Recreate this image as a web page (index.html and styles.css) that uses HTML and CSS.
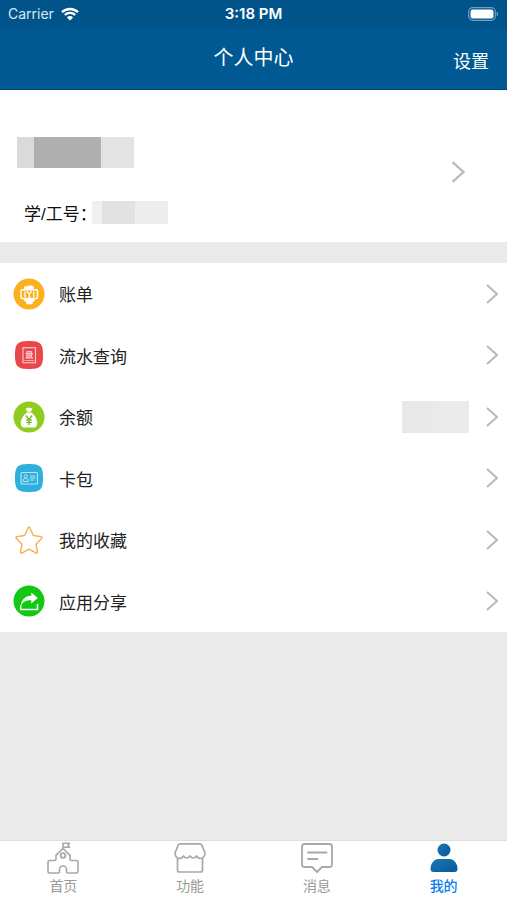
FILE: index.html
```html
<!DOCTYPE html>
<html lang="zh-CN">
<head>
<meta charset="utf-8">
<meta name="viewport" content="width=device-width, initial-scale=1">
<title>个人中心</title>
<link rel="stylesheet" href="styles.css">
</head>
<body>
<header class="header">
  <div class="status">
    <div class="carrier">
      <span>Carrier</span>
      <svg class="wifi" viewBox="0 0 18 14" aria-hidden="true">
        <path d="M1 5.200a11.500 11.500 0 0 1 16 0M3.800 8a7.500 7.500 0 0 1 10.400 0" fill="none" stroke="#fff" stroke-width="2.400"/>
        <path d="M9 13.600 5.900 10.400a4.400 4.400 0 0 1 6.200 0z" fill="#fff"/>
      </svg>
    </div>
    <time class="clock">3:18 PM</time>
    <svg class="battery" viewBox="0 0 31 14" aria-hidden="true">
      <rect x=".7" y=".7" width="26.600" height="12.600" rx="4" fill="none" stroke="#6f9fc2" stroke-width="1.200"/>
      <rect x="2.500" y="2.500" width="23" height="9" rx="2.200" fill="#fff"/>
      <path d="M28.600 4.600c2 .8 2 4 0 4.800z" fill="#6f9fc2"/>
    </svg>
  </div>
  <div class="titlebar">
    <h1 class="title">个人中心</h1>
    <button class="settings" type="button">设置</button>
  </div>
</header>

<main class="main">
  <a class="profile" href="#profile">
    <span class="identity">
      <span class="mask mask-name"></span>
      <span class="number">学/工号：<span class="mask mask-number"></span></span>
    </span>
    <svg class="chevron chevron-large" viewBox="0 0 12 20" aria-hidden="true"><path d="M1 1l10 9-10 9"/></svg>
  </a>

  <nav class="list">
    <a class="row" href="#bill">
      <svg class="icon" viewBox="0 0 32 32" aria-hidden="true">
        <circle cx="16" cy="16" r="15.500" fill="#fbb01c"/>
        <path d="M11 12V8.800l1.800-.8.900 1 .8-1.800 1.700 1 1.300-1.400 1.400 1.400 1.600-.4.500 1.200V12z" fill="#fff"/>
        <rect x="8" y="11.700" width="16.500" height="8.800" rx="1" fill="none" stroke="#fff" stroke-width="1.500"/>
        <path d="M13.800 13.200l2.500 2.800 2.500-2.800M16.300 16v4M20.800 13.500v5.500M12 13.500v5.500" fill="none" stroke="#fff" stroke-width="1.300"/>
        <path d="M10.300 20h12c-.2 2.700-1.500 3.700-2.700 4.300v2h-6.300v-2c-1.500-.8-2.800-2-3-4.300z" fill="#fff"/>
      </svg>
      <span class="label">账单</span>
      <svg class="chevron" viewBox="0 0 12 20" aria-hidden="true"><path d="M1 1l10 9-10 9"/></svg>
    </a>
    <a class="row" href="#records">
      <svg class="icon" viewBox="0 0 32 32" aria-hidden="true">
        <path d="M16 2c11.500 0 14 2.500 14 14s-2.500 14-14 14S2 27.500 2 16 4.500 2 16 2z" fill="#e9484b"/>
        <g fill="none" stroke="#fbc4c5">
          <rect x="10" y="8.700" width="12.500" height="15" stroke-width="1.200"/>
          <path d="M13.500 12.700h5.500M12.500 14.700h7.500M13.500 16.700h5.500M12.500 18.700h7.500" stroke-width="1.500"/>
          <path d="M14 12v7M18.500 12v7M11.500 21.500h9.500" stroke-width=".8"/>
        </g>
      </svg>
      <span class="label">流水查询</span>
      <svg class="chevron" viewBox="0 0 12 20" aria-hidden="true"><path d="M1 1l10 9-10 9"/></svg>
    </a>
    <a class="row" href="#balance">
      <svg class="icon" viewBox="0 0 32 32" aria-hidden="true">
        <circle cx="16" cy="16" r="15.500" fill="#90cc20"/>
        <path d="M12.500 7.200c1.200.7 1.500 0 2.200-.5.700-.5 1.500-.3 2 .2.700.6 1.500.5 2.800 0l-1.700 3.900h-3.600zM13.800 11.500h4.700c3 2.300 5.700 6.500 5.700 10.500 0 3-1.300 4.500-3.500 4.500h-9.400C9.100 26.500 7.800 25 7.800 22c0-3.800 3-8.200 6-10.500z" fill="#fff"/>
        <path d="M12.800 14.500l3.200 4 3.200-4M16 18.500v5.500M13.200 19h5.600M13.200 21.300h5.600" fill="none" stroke="#79b91c" stroke-width="1.300"/>
      </svg>
      <span class="label">余额</span>
      <span class="mask mask-balance"></span>
      <svg class="chevron" viewBox="0 0 12 20" aria-hidden="true"><path d="M1 1l10 9-10 9"/></svg>
    </a>
    <a class="row" href="#cards">
      <svg class="icon" viewBox="0 0 32 32" aria-hidden="true">
        <path d="M16 2c11.500 0 14 2.500 14 14s-2.500 14-14 14S2 27.500 2 16 4.500 2 16 2z" fill="#2eb0de"/>
        <g fill="none" stroke="#b9e6f6">
          <rect x="8" y="10.500" width="16.500" height="11.500" rx="1" stroke-width="1.100"/>
          <circle cx="12.700" cy="14.300" r="1.600"/>
          <path d="M10 19.500c0-2.400 1-3.200 2.700-3.200s2.700.8 2.700 3.200zM17 14h5.500M17 16h5.500M17 18h4"/>
        </g>
      </svg>
      <span class="label">卡包</span>
      <svg class="chevron" viewBox="0 0 12 20" aria-hidden="true"><path d="M1 1l10 9-10 9"/></svg>
    </a>
    <a class="row" href="#favorites">
      <svg class="icon" viewBox="0 0 32 32" aria-hidden="true">
        <path d="M15 4.200q1-1.800 2 0l3.400 7.300 7.600 1.100q1.800.5.500 1.900L23 20.200l1.400 7.400q.1 2-1.700 1.200L16 25.200l-6.700 3.600q-1.800.8-1.700-1.200L9 20.200l-5.500-5.700q-1.300-1.400.5-1.900l7.600-1.100z" fill="none" stroke="#f2ae50" stroke-width="1.400" stroke-linejoin="round"/>
      </svg>
      <span class="label">我的收藏</span>
      <svg class="chevron" viewBox="0 0 12 20" aria-hidden="true"><path d="M1 1l10 9-10 9"/></svg>
    </a>
    <a class="row" href="#share">
      <svg class="icon" viewBox="0 0 32 32" aria-hidden="true">
        <circle cx="16" cy="16" r="15.500" fill="#12c812"/>
        <path d="M18.300 7.500l6.500 5.500-6.500 5.500v-3.300c-4.800-.2-8.300 1.300-10.500 5.800.4-6 4-10.200 10.500-10.300z" fill="#fff"/>
        <path d="M7.700 20v4.500h16.800V19" fill="none" stroke="#fff" stroke-width="1.500"/>
      </svg>
      <span class="label">应用分享</span>
      <svg class="chevron" viewBox="0 0 12 20" aria-hidden="true"><path d="M1 1l10 9-10 9"/></svg>
    </a>
  </nav>
</main>

<nav class="tabs">
  <a class="tab" href="#home">
    <svg class="tab-icon" viewBox="0 0 32 32" aria-hidden="true">
      <g fill="none" stroke="#a8a8a8" stroke-width="1.600" stroke-linejoin="round">
        <path d="M12 31H2.500Q1 31 1 29.500V20q0-1.500 1.500-1.500h5q1.500 0 1.500-1.500v-4l7-6.500 7 6.500v4q0 1.500 1.500 1.500h5q1.500 0 1.500 1.500v9.500q0 1.500-1.500 1.500H20M12.500 31v-3.500a3.500 3.500 0 0 1 7 0V31M9 13.500l7-7.200 7 7.200M16 7V1.200h6.500l-1.500 2 1.500 2H16"/>
        <circle cx="16" cy="13.500" r="2.300" stroke-width="1.800"/>
      </g>
    </svg>
    <span>首页</span>
  </a>
  <a class="tab" href="#features">
    <svg class="tab-icon" viewBox="0 0 32 32" aria-hidden="true">
      <path d="M6.500 1.800h19q1.500 0 2.300 1.300l3 7.400c.5 3.500-1.500 6-4.300 6-2 0-3-.8-4-2.500-1 1.700-2 2-3.200 2s-2.300-.6-3.300-2c-1 1.400-2.100 2-3.300 2s-2.200-.3-3.200-2c-1 1.700-2 2.500-4 2.500-2.800 0-4.800-2.500-4.300-6l3-7.400Q5 1.800 6.500 1.800zM3.500 16.500V28q0 2 2 2h21q2 0 2-2V16.500" fill="none" stroke="#a8a8a8" stroke-width="1.700" stroke-linejoin="round"/>
    </svg>
    <span>功能</span>
  </a>
  <a class="tab" href="#messages">
    <svg class="tab-icon" viewBox="0 0 32 32" aria-hidden="true">
      <path d="M3.500 2h25Q31 2 31 4.500v18q0 2.500-2.500 2.500H21l-5 5-5-5H3.500Q1 25 1 22.500v-18Q1 2 3.500 2zM7 10.500h18.500M7 17h9.500" fill="none" stroke="#a8a8a8" stroke-width="1.800" stroke-linejoin="round" stroke-linecap="round"/>
    </svg>
    <span>消息</span>
  </a>
  <a class="tab tab-active" href="#me" aria-current="page">
    <svg class="tab-icon" viewBox="0 0 32 32" aria-hidden="true">
      <defs><linearGradient id="person" x1="0" y1="0" x2="1" y2="1"><stop offset="0" stop-color="#1878b5"/><stop offset="1" stop-color="#085a96"/></linearGradient></defs>
      <circle cx="16" cy="8" r="6.500" fill="url(#person)"/>
      <path d="M10.500 17h11C26 17 29.500 21.500 29.500 27q0 3-3 3h-21q-3 0-3-3C2.500 21.500 6 17 10.500 17z" fill="url(#person)"/>
    </svg>
    <span>我的</span>
  </a>
</nav>
</body>
</html>
```
FILE: styles.css
```css
* {
  box-sizing: border-box;
}

body {
  margin: 0;
  min-height: 100vh;
  display: flex;
  flex-direction: column;
  background: #eaeaea;
  color: #222;
  font-family: "Liberation Sans", "Noto Sans CJK SC", sans-serif;
  font-size: 17px;
}

a {
  color: inherit;
  text-decoration: none;
}

svg {
  display: block;
  flex: none;
}

.header {
  height: 90px;
  background: #005992;
  border-bottom: 1px solid #004a82;
  color: #fff;
}

.status {
  display: grid;
  grid-template-columns: 1fr auto 1fr;
  align-items: center;
  height: 27px;
  padding: 0 8px;
  background: #00548a;
  font-family: Inter, sans-serif;
  font-size: 14px;
}

.carrier {
  display: flex;
  align-items: center;
  gap: 7px;
  color: #dce9f3;
}

.wifi {
  width: 18px;
  height: 14px;
}

.clock {
  font-size: 15px;
  font-weight: 600;
}

.battery {
  width: 31px;
  height: 14px;
  justify-self: end;
}

.titlebar {
  display: grid;
  grid-template-columns: 1fr auto 1fr;
  align-items: center;
  height: 62px;
  padding: 0 18px;
}

.title {
  grid-column: 2;
  margin: 0;
  font-size: 20px;
  font-weight: 400;
  line-height: 30px;
}

.settings {
  justify-self: end;
  margin: 0;
  padding: 4px 0 0;
  border: 0;
  background: none;
  color: inherit;
  font: inherit;
  font-size: 18px;
}

.main {
  flex: 1;
}

.profile {
  display: flex;
  align-items: center;
  justify-content: space-between;
  height: 152px;
  padding: 12px 42px 0 17px;
  background: #fff;
}

.identity {
  display: flex;
  flex-direction: column;
  gap: 32px;
  padding-top: 17px;
}

.number {
  display: flex;
  align-items: center;
  height: 24px;
  padding-left: 7px;
  color: #111;
}

.mask {
  display: block;
  flex: none;
}

.mask-name {
  width: 117px;
  height: 31px;
  background: linear-gradient(to right, #dadada 17px, #b0b0b0 17px 84px, #e3e3e3 84px);
}

.mask-number {
  width: 76px;
  height: 23px;
  margin-left: -5px;
  background: linear-gradient(to right, #f0f0f0 10px, #e2e2e2 10px 43px, #ededed 43px);
}

.mask-balance {
  width: 67px;
  height: 32px;
  background: linear-gradient(to right, #e8e8e8 31px, #ebebeb 31px);
}

.list {
  display: grid;
  grid-template-rows: repeat(6, 1fr);
  height: 369px;
  margin-top: 21px;
  background: #fff;
}

.row {
  display: flex;
  align-items: center;
  padding: 0 9px 0 13px;
}

.icon {
  width: 32px;
  height: 32px;
  margin-right: 14px;
}

.label {
  flex: 1;
}

.chevron {
  width: 12px;
  height: 20px;
  margin-left: 17px;
  fill: none;
  stroke: #b9b9b9;
  stroke-width: 2;
}

.chevron-large {
  width: 14px;
  height: 22px;
}

.tabs {
  display: grid;
  grid-template-columns: repeat(4, 1fr);
  height: 60px;
  border-top: 1px solid #dedede;
  background: #fff;
}

.tab {
  display: flex;
  flex-direction: column;
  align-items: center;
  padding-top: 1px;
  color: #999;
  font-size: 14px;
  line-height: 24px;
}

.tab-icon {
  width: 32px;
  height: 32px;
}

.tab-active {
  color: #087cf0;
  font-weight: 500;
}
```
